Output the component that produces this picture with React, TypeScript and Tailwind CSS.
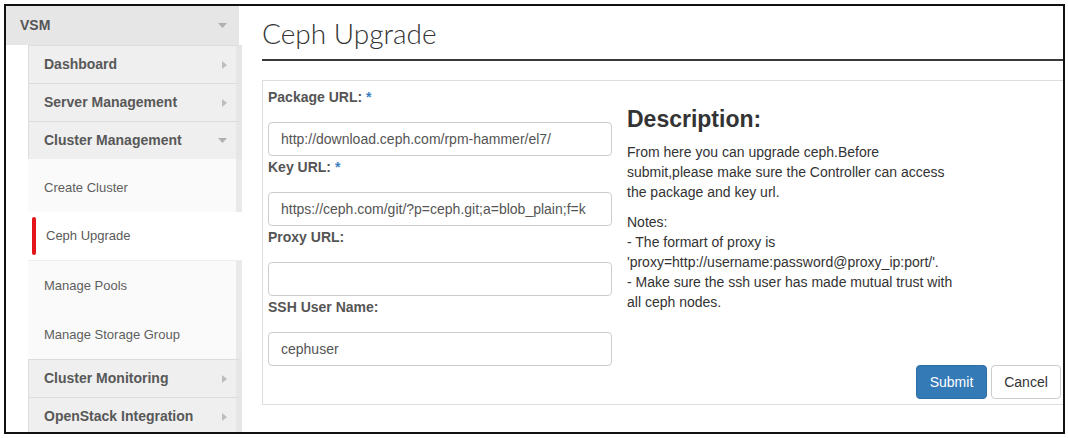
import React from "react";

const sans = { fontFamily: '"Liberation Sans", Arial, sans-serif' };

function TriRight() {
  return (
    <svg width="5" height="8" viewBox="0 0 5 8" className="shrink-0">
      <polygon points="0,0 5,4 0,8" fill="#bdbdbd" />
    </svg>
  );
}
function TriDown() {
  return (
    <svg width="9" height="5" viewBox="0 0 9 5" className="shrink-0">
      <polygon points="0,0 9,0 4.5,5" fill="#b0b0b0" />
    </svg>
  );
}

function HeadItem({ label, down }: { label: string; down?: boolean }) {
  return (
    <div className="h-[38px] shrink-0 flex items-center justify-between border-t border-l border-[#dcdcdc] border-r-[6px] border-r-[#e6e6e6] bg-[#efefef] pl-[15px] pr-[9px]">
      <span className="text-[14px] font-bold text-[#585858]">{label}</span>
      {down ? <TriDown /> : <TriRight />}
    </div>
  );
}

function SubItem({ label, active }: { label: string; active?: boolean }) {
  if (active) {
    return (
      <div className="h-[49px] shrink-0 flex items-center bg-white border-b border-[#eeeeee]">
        <span className="ml-[4px] w-[4px] h-[38px] rounded-[2px] bg-[#e3151b]" />
        <span className="ml-[10px] text-[13px] text-[#5a5a5a]">{label}</span>
      </div>
    );
  }
  return (
    <div className="h-[49px] shrink-0 flex items-center bg-[#fafafa] border-r-[6px] border-r-[#e9e9e9] pl-[16px]">
      <span className="text-[13px] text-[#5e5e5e]">{label}</span>
    </div>
  );
}

function Field({ label, star, value }: { label: string; star?: boolean; value: string }) {
  return (
    <div className="flex flex-col">
      <div className="h-[20px] leading-[20px] mb-[15px] text-[14px] font-bold text-[#555]">
        {label}
        {star && <span className="text-[#3a7fc0]"> *</span>}
      </div>
      <input
        readOnly
        value={value}
        className="h-[34px] w-full border border-[#cccccc] rounded-[4px] px-[12px] text-[14px] text-[#555] bg-white outline-none mb-[1px]"
        style={sans}
      />
    </div>
  );
}

export default function App() {
  return (
    <div className="w-[1068px] h-[438px] bg-white pt-[4px] pl-[4px]" style={sans}>
      <div className="w-[1061px] h-[430px] border-2 border-[#111] flex overflow-hidden bg-white">
        {/* Sidebar */}
        <div className="w-[236px] shrink-0 flex flex-col">
          <div className="h-[39px] shrink-0 w-[233px] flex items-center justify-between bg-[#e6e6e6] pl-[14px] pr-[12px]">
            <span className="text-[14px] font-bold text-[#555]">VSM</span>
            <TriDown />
          </div>
          <div className="flex flex-1">
            <div className="w-[22px] shrink-0 bg-white" />
            <div className="flex-1 flex flex-col">
              <HeadItem label="Dashboard" />
              <HeadItem label="Server Management" />
              <HeadItem label="Cluster Management" down />
              <div className="h-[4px] shrink-0 bg-[#fafafa] border-r-[6px] border-r-[#e9e9e9]" />
              <SubItem label="Create Cluster" />
              <SubItem label="Ceph Upgrade" active />
              <SubItem label="Manage Pools" />
              <SubItem label="Manage Storage Group" />
              <HeadItem label="Cluster Monitoring" />
              <HeadItem label="OpenStack Integration" />
            </div>
          </div>
        </div>

        {/* Main */}
        <div className="flex-1 overflow-hidden pl-[20px] flex flex-col">
          <div className="h-[53px] shrink-0 flex items-end pb-[9px]">
            <span
              className="text-[28px] leading-[34px] text-[#333] font-light"
              style={{ fontFamily: 'Lato, "Open Sans", sans-serif' }}
            >
              Ceph Upgrade
            </span>
          </div>
          <div className="w-[805px] h-[2px] shrink-0 bg-[#3a3a3a]" />
          <div className="w-[805px] shrink-0 mt-[19px] border border-[#dddddd] pt-[6px] pl-[5px] pr-[5px] pb-[5px] flex">
            <div className="w-[344px] shrink-0 flex flex-col pb-[32px]">
              <Field label="Package URL:" star value="http://download.ceph.com/rpm-hammer/el7/" />
              <Field label="Key URL:" star value="https://ceph.com/git/?p=ceph.git;a=blob_plain;f=k" />
              <Field label="Proxy URL:" value="" />
              <Field label="SSH User Name:" value="cephuser" />
            </div>
            <div className="ml-[15px] flex-1 flex flex-col text-[#333]">
              <h3 className="mt-[20px] mb-[10px] text-[23px] leading-[25px] font-bold">Description:</h3>
              <p className="text-[14px] leading-[20px] mb-[10px]">
                From here you can upgrade ceph.Before
                <br />
                submit,please make sure the Controller can access
                <br />
                the package and key url.
              </p>
              <p className="text-[14px] leading-[20px]">
                Notes:
                <br />
                - The formart of proxy is
                <br />
                'proxy=http://username:password@proxy_ip:port/'.
                <br />
                - Make sure the ssh user has made mutual trust with
                <br />
                all ceph nodes.
              </p>
              <div className="mt-auto flex justify-end gap-[4px]">
                <button className="w-[71px] h-[34px] rounded-[4px] bg-[#337ab7] border border-[#2e6da4] text-white text-[14px]">
                  Submit
                </button>
                <button className="w-[70px] h-[34px] rounded-[4px] bg-white border border-[#cccccc] text-[#333] text-[14px]">
                  Cancel
                </button>
              </div>
            </div>
          </div>
        </div>
      </div>
    </div>
  );
}
